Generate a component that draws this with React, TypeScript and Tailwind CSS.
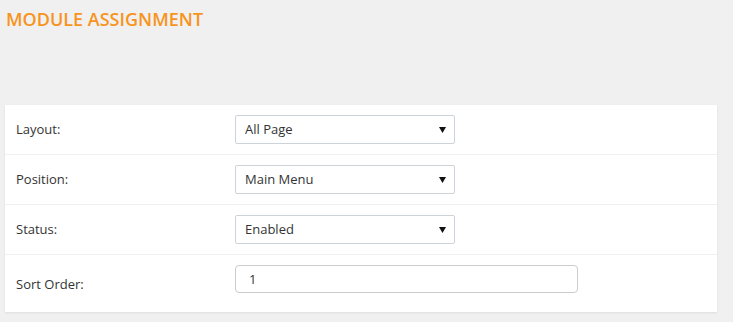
import { useState } from "react";

const selects = [
  { label: "Layout:", value: "All Page", options: ["All Page", "Home", "Product"] },
  { label: "Position:", value: "Main Menu", options: ["Main Menu", "Content Top", "Content Bottom"] },
  { label: "Status:", value: "Enabled", options: ["Enabled", "Disabled"] },
];

function Caret() {
  return (
    <svg width="7" height="6" viewBox="0 0 7 6" className="pointer-events-none absolute right-[9px] top-1/2 -translate-y-1/2">
      <path d="M0 0h7L3.5 6z" fill="#111" />
    </svg>
  );
}

export default function App() {
  const [sortOrder, setSortOrder] = useState("1");

  return (
    <div className="min-h-screen bg-[#f0f0f0] font-['Open_Sans',sans-serif] text-[13px] text-[#333]">
      <div className="px-[6px] pt-[8px]">
        <h1 className="text-[18px] font-semibold leading-[22px] text-[#f7941d]">MODULE ASSIGNMENT</h1>
      </div>
      <div className="mx-[5px] mt-[75px] w-[712px] bg-white shadow-[0_1px_2px_rgba(0,0,0,0.08)]">
        {selects.map((s) => (
          <div key={s.label} className="flex h-[50px] items-center border-b border-[#f0f0f0] px-[11px]">
            <div className="w-[219px]">{s.label}</div>
            <div className="relative">
              <select
                defaultValue={s.value}
                className="h-[29px] w-[220px] appearance-none rounded-[2px] border border-[#ccd3da] bg-white pl-[9px] text-[13px] text-[#333] outline-none"
              >
                {s.options.map((o) => (
                  <option key={o}>{o}</option>
                ))}
              </select>
              <Caret />
            </div>
          </div>
        ))}
        <div className="flex h-[57px] items-start px-[11px] pt-[10px]">
          <div className="w-[219px] pt-[10px]">Sort Order:</div>
          <input
            value={sortOrder}
            onChange={(e) => setSortOrder(e.target.value)}
            className="h-[28px] w-[343px] rounded-[4px] border border-[#ccc] px-[13px] text-[13px] text-[#333] outline-none"
          />
        </div>
      </div>
    </div>
  );
}
